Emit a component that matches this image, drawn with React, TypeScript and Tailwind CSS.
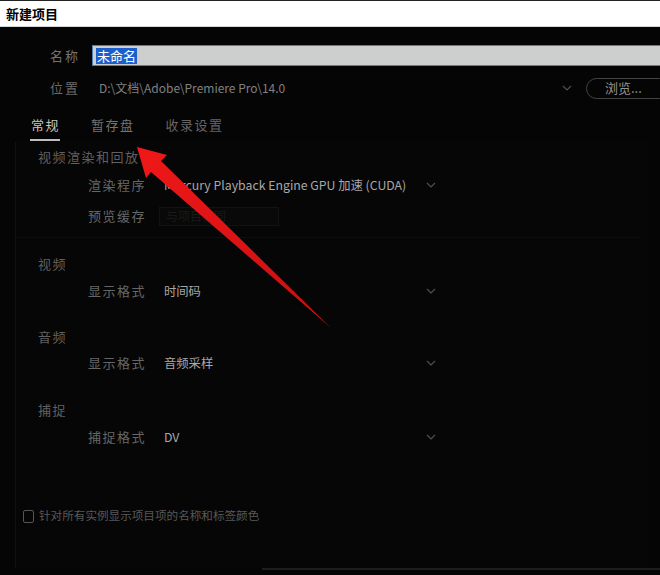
import React from "react";

const font = { fontFamily: '"Noto Sans CJK SC", "Noto Sans", sans-serif' };

function Chevron() {
  return (
    <svg width="10" height="6" viewBox="0 0 10 6" className="shrink-0">
      <path d="M1 1 L5 5 L9 1" fill="none" stroke="#4f4f4f" strokeWidth="1.2" />
    </svg>
  );
}

function Row({ label, value, dropdown = true }: { label: string; value: React.ReactNode; dropdown?: boolean }) {
  return (
    <div className="flex h-[26px] items-center pl-[72px]">
      <div className="w-[76px] text-[13px] tracking-[1.5px] text-[#666]">{label}</div>
      {dropdown ? (
        <div className="flex w-[276px] items-center justify-between pr-[4px]">
          <span className="text-[12.3px] text-[#a8a8a8]">{value}</span>
          <Chevron />
        </div>
      ) : (
        value
      )}
    </div>
  );
}

function Header({ children, className = "" }: { children: React.ReactNode; className?: string }) {
  return (
    <div className={"flex h-5 items-center pl-[22px] text-[13px] tracking-[1.5px] text-[#606060] " + className}>
      {children}
    </div>
  );
}

export default function App() {
  return (
    <div style={font} className="relative h-[575px] w-[660px] overflow-hidden bg-[#050505]">
      {/* title bar */}
      <div className="flex h-[27px] items-center border-t border-[#222] border-b border-b-[#d6d6d6] bg-white pl-[6px]">
        <span className="text-[13px] font-bold text-black">新建项目</span>
      </div>

      {/* name */}
      <div className="mt-[18px] flex h-[21px] items-center">
        <div className="w-[81px] pr-[1px] text-right text-[13px] tracking-[2px] text-[#747474]">名称</div>
        <div className="ml-[11px] flex h-[21px] flex-1 items-center border border-[#4f7fb8] bg-[#cdcfcf] pl-[3px] -mr-[4px]">
          <span className="bg-[#1b5fcf] px-[1px] text-[13px] leading-[16px] text-white">未命名</span>
        </div>
      </div>

      {/* location */}
      <div className="mt-[11px] flex h-[22px] items-center overflow-hidden">
        <div className="w-[81px] shrink-0 pr-[1px] text-right text-[13px] tracking-[2px] text-[#6a6a6a]">位置</div>
        <div className="ml-[18px] w-[463px] shrink-0 text-[12px] text-[#808080]">D:\文档\Adobe\Premiere Pro\14.0</div>
        <Chevron />
        <div className="ml-[14px] flex h-[21px] w-[84px] shrink-0 items-center rounded-full border border-[#444] pl-[18px] text-[13px] text-[#949494]">
          浏览...
        </div>
      </div>

      {/* tabs */}
      <div className="mt-[16px] flex h-[20px] items-center gap-[31px] pl-[31px] text-[13px] tracking-[1.5px]">
        <div className="relative text-[#c4c4c4]">
          常规
          <div className="absolute -bottom-[6px] left-[-1px] right-0 h-[2px] bg-[#bdbdbd]" />
        </div>
        <div className="text-[#747474]">暂存盘</div>
        <div className="text-[#666]">收录设置</div>
      </div>

      {/* panel */}
      <div className="ml-[15px] mt-[7px] h-[426px] w-[634px] border-l border-[#101010] bg-[#060606] pt-[5px]">
        <div className="mr-[8px] border-b border-[#0d0d0d] pb-[8px]">
          <Header>视频渲染和回放</Header>
          <div className="mt-[5px]">
            <Row label="渲染程序" value="Mercury Playback Engine GPU 加速 (CUDA)" />
          </div>
          <div className="mt-[5px]">
            <Row
              label="预览缓存"
              dropdown={false}
              value={
                <div className="-ml-[5px] flex h-[19px] w-[120px] items-center border border-[#121212] bg-[#090909] pl-[6px] text-[12px] text-[#1a1a1a]">
                  与项目相同
                </div>
              }
            />
          </div>
        </div>
        <Header className="mt-[16px]">视频</Header>
        <div className="mt-[4px]">
          <Row label="显示格式" value="时间码" />
        </div>
        <Header className="mt-[23px]">音频</Header>
        <div className="mt-[3px]">
          <Row label="显示格式" value="音频采样" />
        </div>
        <Header className="mt-[24px]">捕捉</Header>
        <div className="mt-[4px]">
          <Row label="捕捉格式" value="DV" />
        </div>

        <div className="mt-[56px] flex h-5 items-center pl-[7px]">
          <div className="h-[13px] w-[11px] rounded-[2px] border-[1.5px] border-[#555]" />
          <span className="ml-[5px] text-[11.6px] text-[#585858]">针对所有实例显示项目项的名称和标签颜色</span>
        </div>
      </div>
      <div className="ml-[262px] h-[2px] bg-[#1c1c1c]" />

      {/* red arrow annotation */}
      <svg className="pointer-events-none absolute left-0 top-0" width="660" height="575">
        <defs>
          <linearGradient id="ag" x1="0" y1="0" x2="1" y2="1">
            <stop offset="0" stopColor="#f01818" />
            <stop offset="1" stopColor="#c80f12" />
          </linearGradient>
        </defs>
        <polygon
          points="137,147 167,155 161,161 331,328 151,172 146,178"
          fill="url(#ag)"
        />
      </svg>
    </div>
  );
}
